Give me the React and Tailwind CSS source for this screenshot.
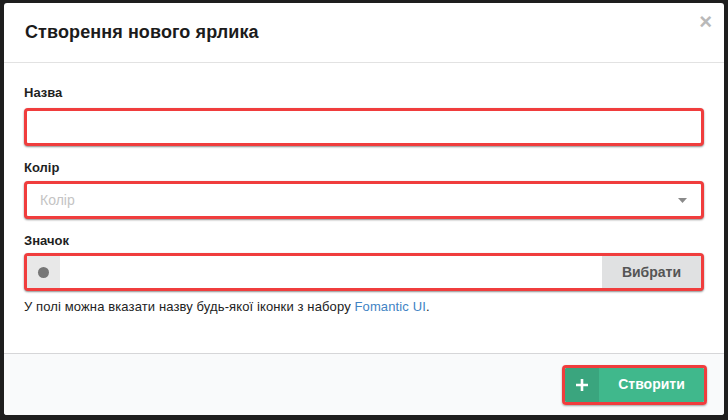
export default function App() {
  return (
    <div className="w-[728px] h-[420px] bg-[#1e1e1e] pt-[3px] pl-[4px] overflow-hidden" style={{ fontFamily: '"Liberation Sans", Arial, sans-serif' }}>
      <div className="w-[720px] h-[412px] bg-white rounded-[3px] flex flex-col relative overflow-hidden">
        <button className="absolute right-[12px] top-[8px] text-[#b9b9b9] text-[22px] leading-none font-bold">×</button>

        <div className="h-[60px] flex items-center pl-[21px] border-b border-[#e2e2e2] shrink-0">
          <h1 className="text-[18px] tracking-[0.1px] font-bold text-[#1b1b1b]">Створення нового ярлика</h1>
        </div>

        <div className="flex-1 px-[20px] pt-[21px]">
          <label className="block text-[13px] leading-[17px] font-bold text-[#1f1f1f] mb-[7px]">Назва</label>
          <div className="h-[38px] border-[3px] border-[#f03d3d] rounded-[4px] bg-white shadow-[0_1px_2px_rgba(0,0,0,0.45)]" />

          <label className="block text-[13px] leading-[17px] font-bold text-[#1f1f1f] mt-[13px] mb-[5px]">Колір</label>
          <div className="h-[38px] border-[3px] border-[#f03d3d] rounded-[4px] bg-white shadow-[0_1px_2px_rgba(0,0,0,0.45)] flex items-center justify-between pl-[13px] pr-[14px]">
            <span className="text-[14px] text-[#c4c4c4]">Колір</span>
            <svg width="9" height="5" viewBox="0 0 9 5"><path d="M0 0h9L4.5 5z" fill="#8a8a8a" /></svg>
          </div>

          <label className="block text-[13px] leading-[17px] font-bold text-[#1f1f1f] mt-[13px] mb-[4px]">Значок</label>
          <div className="h-[38px] border-[3px] border-[#f03d3d] rounded-[4px] bg-white shadow-[0_1px_2px_rgba(0,0,0,0.45)] flex overflow-hidden">
            <div className="w-[33px] bg-[#e8e8e8] flex items-center justify-center">
              <span className="w-[11px] h-[11px] rounded-full bg-[#767676]" />
            </div>
            <div className="flex-1" />
            <div className="w-[99px] bg-[#e0e1e2] flex items-center justify-center text-[14px] font-bold text-[#555]">Вибрати</div>
          </div>

          <p className="mt-[7px] text-[13px] tracking-[0.12px] leading-[17px] text-[#222]">
            У полі можна вказати назву будь-якої іконки з набору <span className="text-[#4183c4]">Fomantic UI</span>.
          </p>
        </div>

        <div className="h-[62px] border-t border-[#d6d6d8] bg-[#f9fafb] flex items-center justify-end pr-[17px] shrink-0">
          <div className="w-[145px] h-[40px] border-[3px] border-[#f03d3d] rounded-[4px] flex overflow-hidden shadow-[0_1px_2px_rgba(0,0,0,0.35)]">
            <div className="w-[34px] bg-[#3aa57e] flex items-center justify-center">
              <svg width="12" height="12" viewBox="0 0 12 12"><path d="M6 0v12M0 6h12" stroke="white" strokeWidth="2.6" /></svg>
            </div>
            <div className="flex-1 bg-[#40b88c] flex items-center justify-center text-white text-[14px] font-bold">Створити</div>
          </div>
        </div>
      </div>
    </div>
  )
}
